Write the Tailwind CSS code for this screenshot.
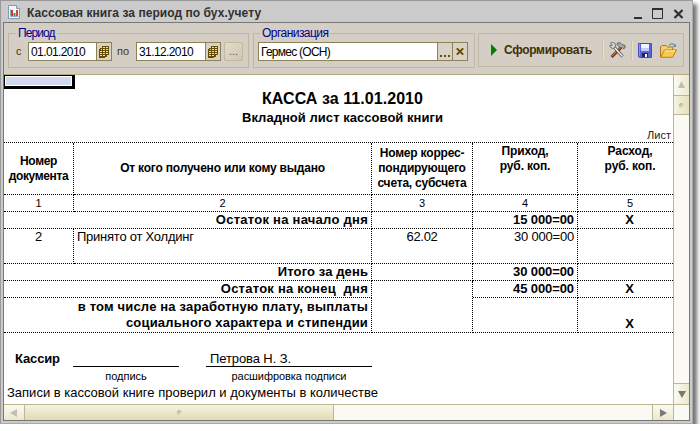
<!DOCTYPE html>
<html lang="ru">
<head>
<meta charset="utf-8">
<title>Кассовая книга за период по бух.учету</title>
<script src="https://cdn.jsdelivr.net/npm/@tailwindcss/browser@4"></script>
</head>
<body class="bg-white overflow-hidden font-['Liberation_Sans',Arial,sans-serif] text-black">
<div class="w-[693px] h-[424px] bg-[#cbcbcb] border border-[#999] border-r-[#aaa] border-b-[#aaa] shadow-[4px_4px_4px_rgba(0,0,0,0.55)] flex flex-col">

  <!-- Title bar -->
  <header class="h-[21px] shrink-0 flex items-center pl-[7px]">
    <svg class="w-3 h-[14px] mt-px shrink-0" viewBox="0 0 12 14">
      <path d="M.5.5h8l3 3v10H.5z" fill="#f5fafc" stroke="#7e9cae"/>
      <path d="M8.5.5v3h3" fill="#cfe0ea" stroke="#7e9cae"/>
      <path d="M2.5 4v7.5h8" fill="none" stroke="#9ab"/>
      <path d="M3 5h2v6H3z" fill="#d33b2c"/><path d="M5.5 8h2v3h-2z" fill="#2f9a42"/><path d="M8 5h2v6H8z" fill="#e0442c"/>
    </svg>
    <h1 class="ml-[7px] mt-[2px] text-[12px] leading-4 font-bold tracking-[0.05px] text-[#303030] whitespace-nowrap">Кассовая книга за период по бух.учету</h1>
    <svg class="ml-auto mr-[8px] mt-[2px] w-[50px] h-[12px]" viewBox="0 0 50 12">
      <path d="M0 10h8v2H0z" fill="#2f2f2f"/>
      <path d="M18.500 2.500v9h10v-9z" fill="none" stroke="#2f2f2f"/><path d="M18 1h11v2H18z" fill="#2f2f2f"/>
      <path d="M40.500 3l8 8M48.500 3l-8 8" stroke="#2f2f2f" stroke-width="2.200"/>
    </svg>
  </header>

  <main class="ml-[2px] w-[687px] h-[399px] border border-[#777] flex flex-col bg-white">

    <!-- Toolbar -->
    <div class="h-[52px] shrink-0 bg-[#d5cec5] border-b border-[#b0a880] flex pt-[3px] pl-1 text-[12px]">
      <fieldset class="w-[241px] h-[42px] border border-[#bfb7a3] pl-[7px]">
        <legend class="px-[2px] h-[14px] leading-[14px] text-[#00008b] tracking-[-0.9px]">Период</legend>
        <div class="flex items-center mt-[2px] h-[19px] whitespace-nowrap">
          <span class="w-[12px] text-[11px] text-[#4a3800]">с</span>
          <div class="w-[84px] h-[19px] border border-[#8c8257] bg-white flex">
            <span class="grow pl-[2px] leading-[18px] tracking-[-0.6px]">01.01.2010</span>
            <span class="w-[15px] border-l border-[#8c8257] bg-[#d9d2c6] flex items-center justify-center">
              <svg class="w-[10px] h-[12px]" viewBox="0 0 10 12"><path d="M3 0h7v9H8v2H6v1H0V3h1V2h2z" fill="#664d00"/><path d="M4 1.500h2M7 1.500h2M2 3.500h1M4 3.500h2M7 3.500h2M1 5.500h2M4 5.500h2M7 5.500h2M1 7.500h2M4 7.500h2M7 7.500h2M1 9.500h2M4 9.500h2" stroke="#e8dfc0"/></svg>
            </span>
          </div>
          <span class="w-[24px] pl-[5px] text-[11px] text-[#4a3800]">по</span>
          <div class="w-[85px] h-[19px] border border-[#8c8257] bg-white flex">
            <span class="grow pl-[2px] leading-[18px] tracking-[-0.6px]">31.12.2010</span>
            <span class="w-[15px] border-l border-[#8c8257] bg-[#d9d2c6] flex items-center justify-center">
              <svg class="w-[10px] h-[12px]" viewBox="0 0 10 12"><path d="M3 0h7v9H8v2H6v1H0V3h1V2h2z" fill="#664d00"/><path d="M4 1.500h2M7 1.500h2M2 3.500h1M4 3.500h2M7 3.500h2M1 5.500h2M4 5.500h2M7 5.500h2M1 7.500h2M4 7.500h2M7 7.500h2M1 9.500h2M4 9.500h2" stroke="#e8dfc0"/></svg>
            </span>
          </div>
          <button class="ml-[3px] w-[19px] h-[19px] border border-[#c3b999] rounded-[2px] bg-linear-to-br from-[#e2dccd] to-[#cfc7b5] text-[11px] leading-[17px] text-[#6a5a30]">...</button>
        </div>
      </fieldset>

      <fieldset class="ml-1 w-[222px] h-[42px] border border-[#bfb7a3] pl-[4px]">
        <legend class="ml-[2px] px-[2px] h-[14px] leading-[14px] text-[#00008b] tracking-[-0.54px]">Организация</legend>
        <div class="mt-[2px] w-[210px] h-[19px] border border-[#8c8257] bg-white flex whitespace-nowrap">
          <span class="grow pl-[2px] leading-[18px] tracking-[-0.75px]">Гермес (ОСН)</span>
          <span class="w-[15px] border-l border-[#8c8257] bg-[#d9d2c6] flex items-end justify-center pb-[3px]">
            <svg class="w-[10px] h-[2px]" viewBox="0 0 10 2"><path d="M0 0h2v2H0zM4 0h2v2H4zM8 0h2v2H8z" fill="#664d00"/></svg>
          </span>
          <span class="w-[15px] border-l border-[#8c8257] bg-[#d9d2c6] flex items-center justify-center">
            <svg class="w-2 h-[7px]" viewBox="0 0 8 7"><path d="M.8.3l6.400 6.400M7.200.3L.8 6.700" stroke="#664d00" stroke-width="1.900"/></svg>
          </span>
        </div>
      </fieldset>

      <div class="ml-[3px] mt-[7px] w-[206px] h-[34px] border border-[#bfb7a3] flex items-center">
        <svg class="ml-[12px] w-[6px] h-[12px]" viewBox="0 0 6 12"><path d="M0 0l6 6-6 6z" fill="#007f00"/></svg>
        <span class="ml-[7px] w-[88px] mr-[10px] text-[12px] font-bold tracking-[-0.31px] text-[#403000] whitespace-nowrap">Сформировать</span>
        <span class="w-[2px] h-[19px] bg-linear-to-r from-[#c0b690] to-[#f4f0df]"></span>
        <svg class="ml-[5px] w-[17px] h-[17px]" viewBox="0 0 17 17">
          <path d="M2.500 15L12 5.500" stroke="#5b2a10" stroke-width="3"/><path d="M2.500 14.500l9-9" stroke="#c8743a" stroke-width="1.300"/>
          <path d="M8 1.500l3-1 2 2 3 1v2.500l-2 .5-1.500-1.500-1 1-3-3z" fill="#a9a9a4" stroke="#50504c" stroke-width=".8"/>
          <path d="M5 5l8.500 9.500" stroke="#555" stroke-width="3"/><path d="M5 5l8.300 9.300" stroke="#ececec" stroke-width="1.500"/>
          <path d="M1.500 1l2 2-1 1-1.500-1C.5 5.500 3 7 5 6.200 7 5 7 2 5.500 1 4 0 2.500.3 1.500 1z" fill="#d8d8d4" stroke="#555" stroke-width=".8"/>
        </svg>
        <span class="ml-[5px] w-[2px] h-[19px] bg-linear-to-r from-[#c0b690] to-[#f4f0df]"></span>
        <svg class="ml-[5px] w-[14px] h-[15px]" viewBox="0 0 14 15">
          <path d="M.5.5h13v14h-12l-1-1z" fill="#5a62d8" stroke="#474cb8"/>
          <path d="M3 1h8v7H3z" fill="#f1f4fd"/><path d="M3 5h8v3H3z" fill="#c3cdf2"/>
          <path d="M4 10h6v4H4z" fill="#20225e"/><path d="M7 11h2v3H7z" fill="#fff"/><path d="M1 1h1v12H1z" fill="#8d92ef"/>
        </svg>
        <svg class="ml-[8px] w-[17px] h-[15px]" viewBox="0 0 17 15">
          <path d="M.5 14V4l1.500-1.500h4L7.500 4h5v3" fill="#f3cf72" stroke="#ad7a17"/>
          <path d="M.7 14.300L4.500 7h12l-4 7.300z" fill="#fbc84e" stroke="#b98113"/>
          <path d="M4.800 7.900h10.400" stroke="#ffeeb0"/>
          <path d="M9 2.500C10.500.5 13 .5 14.500 2.200" fill="none" stroke="#6c8da9" stroke-width="1.200"/><path d="M12.500 4h3.500V.8z" fill="#6c8da9"/>
        </svg>
      </div>
    </div>

    <div class="flex h-[329px] shrink-0">
      <!-- Sheet -->
      <section class="w-[669px] h-[329px] overflow-hidden">
        <div class="w-[71px] h-[14px] border-black border-t border-l border-r-[3px] border-b-[3px] p-px"><div class="h-full bg-[#d3d9f0]"></div></div>
        <div class="h-[53px] text-center whitespace-nowrap">
          <h2 class="pt-px ml-2 text-[16px] leading-[18px] font-bold tracking-[0.06px]">КАССА за 11.01.2010</h2>
          <h3 class="ml-2 text-[13px] leading-[19px] font-bold tracking-[0.04px]">Вкладной лист кассовой книги</h3>
          <p class="pt-[2px] pr-[2px] text-[11px] leading-[13px] text-right text-[#222]">Лист</p>
        </div>

        <div class="grid grid-cols-[70px_298px_101px_105px_95px] grid-rows-[52px_17px_17px_35px_17px_17px_35px] border-t border-dotted border-black *:border-dotted *:border-black *:border-b whitespace-nowrap text-[13px] leading-[16px]">
          <div class="border-r flex items-center justify-center text-center text-[12px] leading-[15px] font-bold tracking-[-0.35px]">Номер<br>документа</div>
          <div class="border-r flex items-center justify-center text-[12px] leading-[15px] font-bold tracking-[-0.2px]">От кого получено или кому выдано</div>
          <div class="border-r flex items-center justify-center text-center text-[12px] leading-[15px] font-bold tracking-[-0.2px]">Номер коррес-<br>пондирующего<br>счета, субсчета</div>
          <div class="border-r text-center text-[12px] leading-[15px] pt-px font-bold tracking-[-0.15px]">Приход,<br>руб. коп.</div>
          <div class="text-center text-[12px] leading-[15px] pt-px pl-[9px] font-bold tracking-[-0.1px]">Расход,<br>руб. коп.</div>

          <div class="border-r text-center text-[11px]">1</div>
          <div class="border-r text-center text-[11px]">2</div>
          <div class="border-r text-center text-[11px]">3</div>
          <div class="border-r text-center text-[11px]">4</div>
          <div class="pl-[9px] text-center text-[11px]">5</div>

          <div class="col-span-2 border-r pr-[3px] text-right font-bold tracking-[0.26px]">Остаток на начало дня</div>
          <div class="border-r"></div>
          <div class="border-r pr-[3px] text-right font-bold tracking-[-0.1px]">15 000=00</div>
          <div class="pl-[8px] text-center font-bold">X</div>

          <div class="border-r text-center">2</div>
          <div class="border-r pl-[3px] tracking-[-0.24px]">Принято от Холдинг</div>
          <div class="border-r text-center tracking-[-0.3px]">62.02</div>
          <div class="border-r pr-[3px] text-right tracking-[-0.2px]">30 000=00</div>
          <div></div>

          <div class="col-span-2 border-r pr-[3px] text-right font-bold tracking-[0.11px]">Итого за день</div>
          <div class="border-r"></div>
          <div class="border-r pr-[3px] text-right font-bold tracking-[-0.1px]">30 000=00</div>
          <div></div>

          <div class="col-span-2 border-r pr-[3px] text-right font-bold tracking-[0.24px] whitespace-pre">Остаток на конец  дня</div>
          <div class="row-span-2 border-r"></div>
          <div class="border-r pr-[3px] text-right font-bold tracking-[-0.1px]">45 000=00</div>
          <div class="pl-[8px] text-center font-bold">X</div>

          <div class="col-span-2 border-r pt-px pr-[3px] text-right font-bold tracking-[0.18px]">в том числе на заработную плату, выплаты<br>социального характера и стипендии</div>
          <div class="border-r"></div>
          <div class="pl-[8px] font-bold flex items-end justify-center">X</div>
        </div>

        <div class="flex pt-[17px] pl-[11px] text-[13px] leading-[16px] whitespace-nowrap">
          <span class="w-[58px] pt-px font-bold tracking-[-0.14px]">Кассир</span>
          <div class="w-[106px] text-center"><div class="h-[17px] border-b border-black"></div><p class="pt-[3px] text-[11px] leading-[13px]">подпись</p></div>
          <div class="ml-[27px] w-[166px]"><div class="h-[17px] pl-1 pt-px border-b border-black tracking-[-0.1px]">Петрова Н. З.</div><p class="pt-[3px] text-center text-[11px] leading-[13px] tracking-[-0.06px]">расшифровка подписи</p></div>
        </div>
        <p class="pl-[3px] pt-[2px] text-[13px] leading-4 whitespace-nowrap">Записи в кассовой книге проверил и документы в количестве</p>
      </section>

      <!-- Vertical scrollbar -->
      <div class="w-[16px] border-l border-[#bdb593] bg-[#faf9f4] flex flex-col">
        <div class="h-[21px] border-b border-[#bdb593] bg-linear-to-r from-[#fbfaf1] to-[#ece8cc] flex items-center justify-center pb-[2px]"><svg class="w-[7px] h-[7px]" viewBox="0 0 7 7"><path d="M3.500 0L7 7H0z" fill="#c1bfb4"/></svg></div>
        <div class="h-[19px] border-b border-[#bdb593] bg-linear-to-r from-[#f7f4e0] to-[#e5dfba] flex items-center justify-center"><span class="w-[5px] h-[5px] rounded-full bg-linear-to-br from-[#aaa68d] to-[#f3efd8]"></span></div>
        <div class="mt-auto h-[21px] border-t border-[#bdb593] bg-linear-to-r from-[#fbfaf1] to-[#ece8cc] flex items-center justify-center"><svg class="w-[8px] h-[7px]" viewBox="0 0 8 7"><path d="M0 0h8L4 7z" fill="#77777a"/></svg></div>
      </div>
    </div>

    <!-- Horizontal scrollbar -->
    <div class="h-[16px] shrink-0 border-t border-[#bdb593] bg-[#faf9f4] flex">
      <div class="w-[21px] pr-[2px] border-r border-[#bdb593] bg-linear-to-b from-[#fbfaf1] to-[#ece8cc] flex items-center justify-center"><svg class="w-[7px] h-[8px]" viewBox="0 0 7 8"><path d="M7 0v8L0 4z" fill="#c1bfb4"/></svg></div>
      <div class="w-[309px] border-r border-[#bdb593] bg-linear-to-b from-[#f7f4e0] to-[#e0dab4] flex items-center justify-center"><span class="w-[5px] h-[5px] rounded-full bg-linear-to-br from-[#aaa68d] to-[#f3efd8]"></span></div>
      <div class="ml-auto w-[22px] border-x border-[#bdb593] bg-linear-to-b from-[#fbfaf1] to-[#ece8cc] flex items-center justify-center"><svg class="w-[7px] h-[8px]" viewBox="0 0 7 8"><path d="M0 0v8l7-4z" fill="#77777a"/></svg></div>
      <div class="w-[15px]"></div>
    </div>
  </main>
</div>
</body>
</html>
